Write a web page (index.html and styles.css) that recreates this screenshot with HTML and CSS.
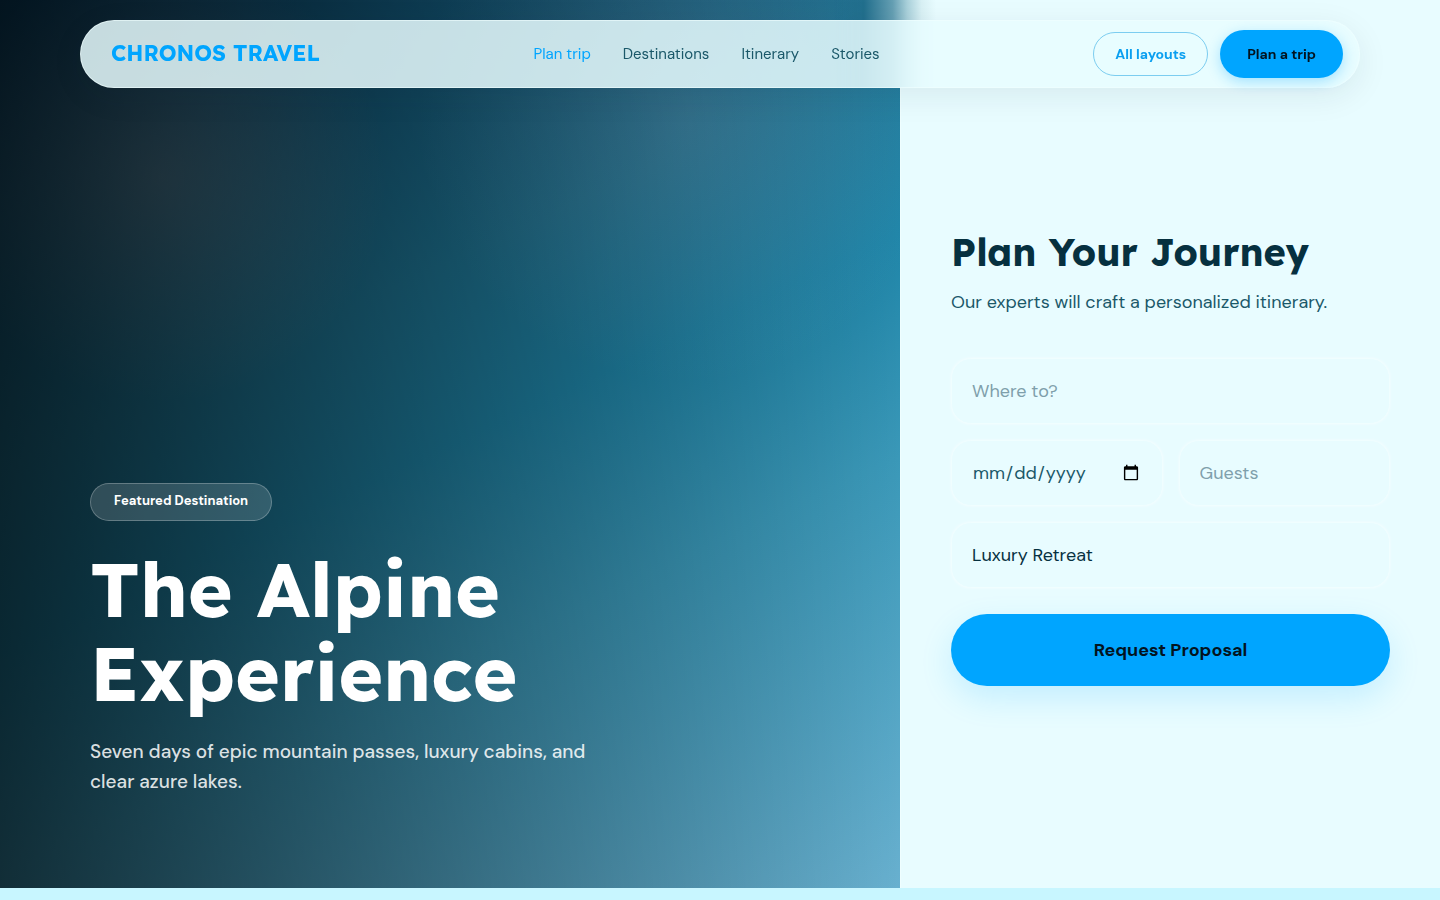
FILE: index.html
```html
<!DOCTYPE html>
<html lang="en">
<head>
    <meta charset="UTF-8">
    <meta name="viewport" content="width=device-width, initial-scale=1.0">
    <title>Chronos Travel</title>
    <link rel="stylesheet" href="styles.css">
</head>
<body>
    <header class="site-header">
        <div class="navbar">
            <a href="#" class="logo">CHRONOS TRAVEL</a>
            <nav class="nav-links">
                <a href="#plan" class="active">Plan trip</a>
                <a href="#destinations">Destinations</a>
                <a href="#itinerary">Itinerary</a>
                <a href="#stories">Stories</a>
            </nav>
            <div class="nav-actions">
                <a href="#layouts" class="btn btn-outline">All layouts</a>
                <a href="#plan" class="btn btn-primary">Plan a trip</a>
            </div>
        </div>
    </header>

    <main class="split">
        <section class="hero">
            <span class="badge">Featured Destination</span>
            <h1>The Alpine Experience</h1>
            <p>Seven days of epic mountain passes, luxury cabins, and clear azure lakes.</p>
        </section>

        <section class="planner" id="plan">
            <h2>Plan Your Journey</h2>
            <p>Our experts will craft a personalized itinerary.</p>
            <form class="trip-form">
                <input type="text" name="destination" placeholder="Where to?" aria-label="Where to?">
                <div class="form-row">
                    <input type="date" name="date" aria-label="Travel date">
                    <input type="number" name="guests" placeholder="Guests" aria-label="Guests">
                </div>
                <select name="style" aria-label="Trip style">
                    <option>Luxury Retreat</option>
                    <option>Adventure</option>
                    <option>Family</option>
                </select>
                <button type="submit">Request Proposal</button>
            </form>
        </section>
    </main>
</body>
</html>
```
FILE: styles.css
```css
* {
    box-sizing: border-box;
}

body {
    margin: 0;
    min-height: 100vh;
    font-family: "DM Sans", Inter, sans-serif;
    color: #06303f;
    background: #c8f6ff;
}

a {
    text-decoration: none;
}

h1,
h2,
p {
    margin: 0;
}

/* Header */
.site-header {
    position: fixed;
    top: 0;
    left: 0;
    right: 0;
    z-index: 10;
    padding: 20px 80px 0;
    /* soft seam between the two halves behind the bar */
    background: linear-gradient(90deg, transparent 58%, #226f8d 60%, #659fb3 62%, #a9d0da 63%, #d8f0f4 64%, #e8fcff 65%);
}

.navbar {
    display: flex;
    justify-content: space-between;
    align-items: center;
    height: 68px;
    padding: 0 16px 0 30px;
    border: 1px solid rgba(240, 255, 255, 0.6);
    border-radius: 34px;
    background: rgba(232, 253, 255, 0.85);
    box-shadow: 0 8px 32px rgba(0, 40, 50, 0.08);
}

.logo {
    font-family: Lexend, Inter, sans-serif;
    font-size: 22px;
    font-weight: 700;
    line-height: 26px;
    padding-bottom: 2px;
    color: #00a5ff;
}

.nav-links {
    display: flex;
    gap: 32px;
    font-size: 15px;
}

.nav-links a {
    color: #1a5869;
}

.nav-links a.active {
    color: #00a5ff;
}

.nav-actions {
    display: flex;
    align-items: center;
    gap: 12px;
}

.btn {
    font-size: 14px;
    font-weight: 700;
    border-radius: 24px;
}

.btn-outline {
    padding: 0 21px;
    line-height: 42px;
    color: #0a9ff0;
    border: 1px solid #7ccdf0;
}

.btn-primary {
    padding: 0 27px;
    line-height: 48px;
    color: #03141f;
    background: #00a5ff;
    box-shadow: 0 4px 14px rgba(0, 165, 255, 0.3);
}

/* Split layout */
.split {
    display: grid;
    grid-template-columns: 5fr 3fr;
    min-height: calc(100vh - 12px);
}

.hero {
    display: flex;
    flex-direction: column;
    justify-content: flex-end;
    align-items: flex-start;
    padding: 120px 90px 91px;
    color: #fff;
    background:
        linear-gradient(90deg, rgba(0, 0, 0, 0.7), transparent),
        radial-gradient(circle at 18% 20%, rgba(255, 190, 170, 0.2), transparent 22%),
        radial-gradient(circle at 76% 13%, rgba(210, 200, 225, 0.16), transparent 26%),
        linear-gradient(155deg, #0a4367 0%, #155d80 16%, #1f7898 36%, #1f85a8 50%, #3a98b8 67%, #68b0cf 100%);
}

.badge {
    padding: 0 23px 2px;
    margin-bottom: 26px;
    font-size: 13px;
    font-weight: 700;
    line-height: 34px;
    border: 1px solid rgba(255, 255, 255, 0.25);
    border-radius: 20px;
    background: rgba(255, 255, 255, 0.15);
}

.hero h1 {
    max-width: 600px;
    margin-bottom: 22px;
    font-family: Lexend, Inter, sans-serif;
    font-size: 76px;
    font-weight: 700;
    line-height: 84px;
}

.hero p {
    max-width: 520px;
    font-size: 19px;
    font-weight: 500;
    line-height: 30px;
    color: rgba(255, 255, 255, 0.85);
}

.planner {
    display: flex;
    flex-direction: column;
    justify-content: center;
    padding: 120px 50px 94px;
    border-left: 1px solid #effeff;
    background: #e8fcff;
}

.planner h2 {
    margin-bottom: 12px;
    font-family: Lexend, Inter, sans-serif;
    font-size: 38px;
    font-weight: 700;
    line-height: 48px;
}

.planner p {
    margin-bottom: 42px;
    font-size: 18px;
    line-height: 28px;
    color: #1a5869;
}

/* Form */
.trip-form {
    display: grid;
    gap: 16px;
}

.form-row {
    display: grid;
    grid-template-columns: 1fr 1fr;
    gap: 16px;
}

.trip-form input,
.trip-form select {
    width: 100%;
    height: 66px;
    padding: 0 20px;
    font-family: inherit;
    font-size: 18px;
    color: #06303f;
    border: 1px solid #f0feff;
    border-radius: 20px;
    background: #e8fcff;
    box-shadow: 0 0 3px rgba(255, 255, 255, 0.6);
    appearance: none;
}

.trip-form input::placeholder {
    color: #7f9fab;
}

.trip-form input[type="date"] {
    color: #1a5869;
}

.trip-form button {
    height: 72px;
    margin-top: 10px;
    font-family: inherit;
    font-size: 18px;
    font-weight: 700;
    color: #03141f;
    border: none;
    border-radius: 36px;
    background: #00a5ff;
    box-shadow: 0 12px 32px rgba(0, 165, 255, 0.16);
    cursor: pointer;
}
```
